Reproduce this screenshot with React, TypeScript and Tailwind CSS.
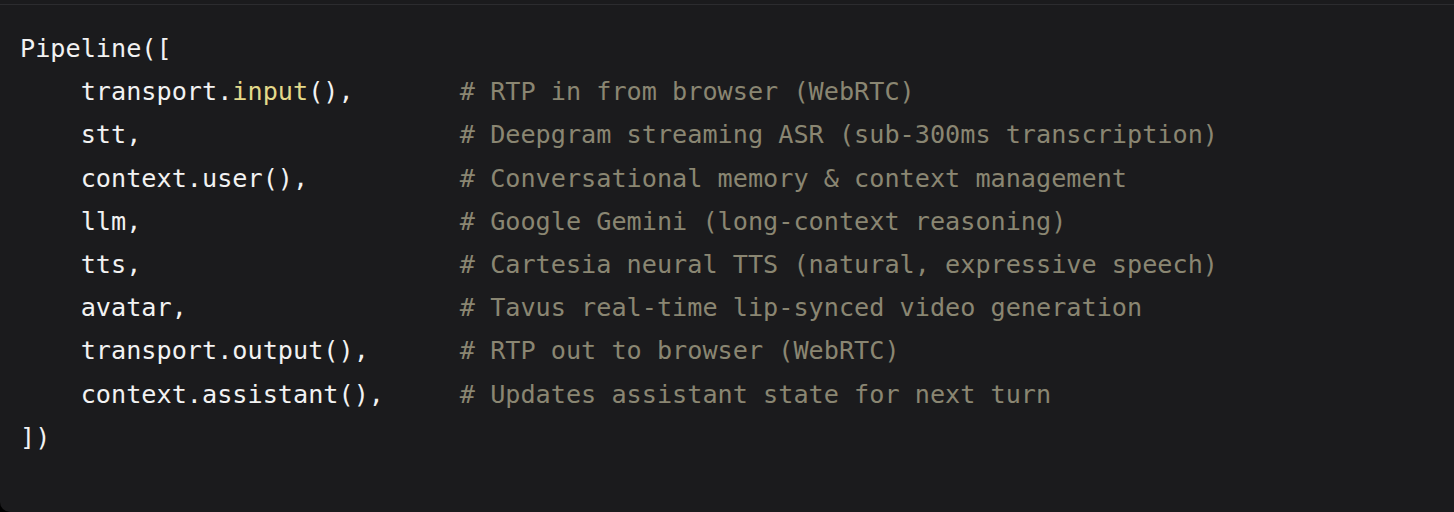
const lines: { code: string; fn?: string; rest?: string; comment: string }[] = [
  { code: 'transport.', fn: 'input', rest: '(),', comment: '# RTP in from browser (WebRTC)' },
  { code: 'stt,', comment: '# Deepgram streaming ASR (sub-300ms transcription)' },
  { code: 'context.user(),', comment: '# Conversational memory & context management' },
  { code: 'llm,', comment: '# Google Gemini (long-context reasoning)' },
  { code: 'tts,', comment: '# Cartesia neural TTS (natural, expressive speech)' },
  { code: 'avatar,', comment: '# Tavus real-time lip-synced video generation' },
  { code: 'transport.output(),', comment: '# RTP out to browser (WebRTC)' },
  { code: 'context.assistant(),', comment: '# Updates assistant state for next turn' },
];

const pad = (s: string, n: number) => s + ' '.repeat(Math.max(1, n - s.length));

export default function App() {
  return (
    <div className="w-[1454px] h-[512px] bg-black overflow-hidden">
      <div className="h-[5px] bg-[#1b1b1d] border-b border-[#2c2c2f]" />
      <div className="h-[507px] bg-[#1b1b1d] rounded-bl-[10px] pl-[20px] pt-[22px]">
        <pre className="font-['DejaVu_Sans_Mono',monospace] text-[25.2px] leading-[43.2px] text-[#f2f2f2]">
          <div>Pipeline([</div>
          {lines.map((l, i) => {
            const len = l.code.length + (l.fn?.length ?? 0) + (l.rest?.length ?? 0);
            return (
              <div key={i}>
                {'    '}
                {l.code}
                {l.fn ? <span className="text-[#e3d98b]">{l.fn}</span> : null}
                {l.rest}
                {pad('', 25 - len)}
                <span className="text-[#8a8672]">{l.comment}</span>
              </div>
            );
          })}
          <div>])</div>
        </pre>
      </div>
    </div>
  );
}
